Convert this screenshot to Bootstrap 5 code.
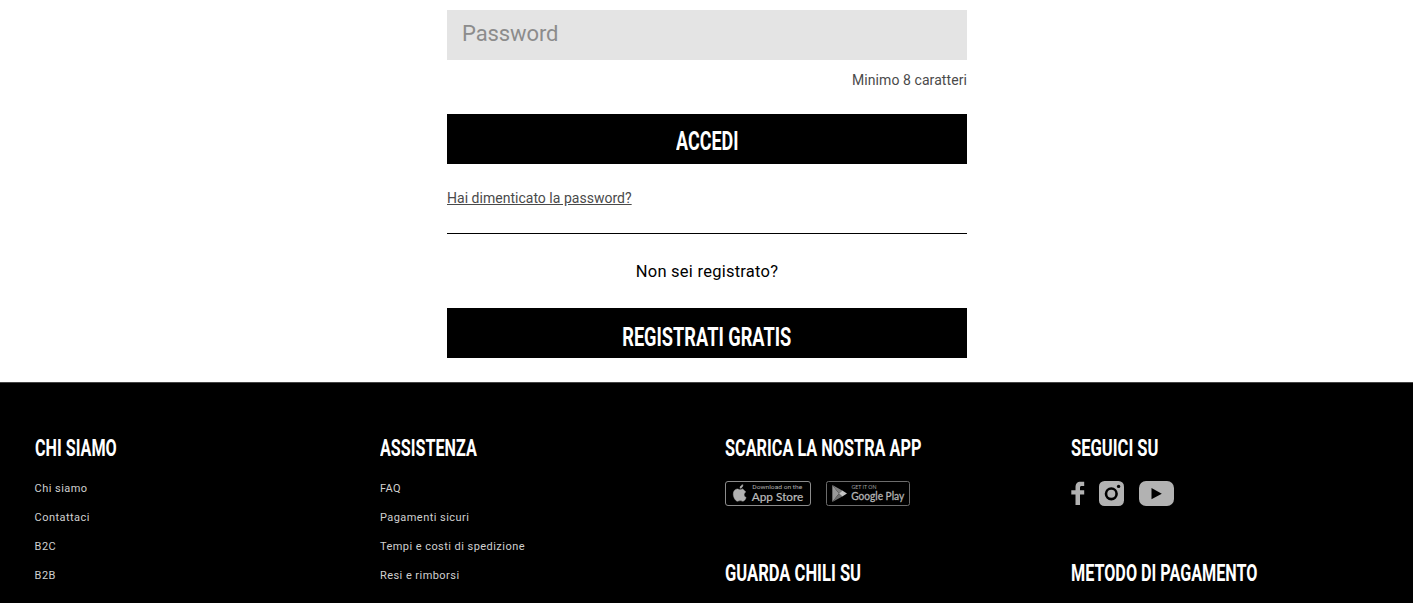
<!DOCTYPE html>
<html lang="it">
<head>
<meta charset="utf-8">
<meta name="viewport" content="width=device-width, initial-scale=1">
<title>CHILI - Accedi</title>
<link href="https://cdn.jsdelivr.net/npm/bootstrap@5.3.0/dist/css/bootstrap.min.css" rel="stylesheet">
<style>
body{font-family:Roboto,"Liberation Sans",sans-serif;background:#fff;color:#000;overflow:hidden}
.login-form{width:520px;margin-left:447px;padding-top:10px;height:382px}
.login-form .form-control{height:50px;background:#e4e4e4;padding:0 15px 3px;font-size:22px;letter-spacing:-.1px;color:#333}
.login-form .form-control::placeholder{color:#8c8c8c;opacity:1}
.hint{height:54px;padding-top:10px;font-size:14px;line-height:21px;letter-spacing:.08px;color:#4a4a4a}
.btn-chili{height:50px;background:#000;color:#fff;font-size:26px;font-weight:700;line-height:30px;padding:12px 0 8px}
.btn-chili.btn-register{padding:14px 0 6px}
.btn-chili:hover{background:#222;color:#fff}
.narrow{display:inline-block;transform:scaleX(.7);white-space:nowrap}
.btn-chili .tight{transform:scaleX(.69)}
.forgot{height:69px;padding-top:24px;font-size:14px;line-height:21px;letter-spacing:.02px}
.forgot a{color:#4a4a4a}
.separator{height:1px;background:#000}
.ask{height:74px;padding-top:26px;font-size:16.5px;line-height:24px;letter-spacing:.25px}
.site-footer{height:221px;background:#000;border-top:1px solid #444;padding:50px 12px 0 19.6px;overflow:hidden}
.site-footer .row>div{padding:0 15px}
.site-footer h2{color:#fff;font-size:24px;line-height:30px;font-weight:700;margin:0 0 17px}
.site-footer h2 .narrow{transform-origin:0 50%;transform:scaleX(.674)}
.site-footer h2 .semi{transform:scaleX(.69)}
.site-footer h2 .scarica{transform:scaleX(.678)}
.site-footer li{font-size:11px;line-height:17px;margin-bottom:12px;letter-spacing:.45px}
.site-footer li a{color:#d0d0d0;text-decoration:none}
.icon-row{height:25px;margin:18px 0 52px}
.icon-row svg{display:block}
.store-gap{margin-right:15px}
</style>
</head>
<body>
<main class="login-form">
  <input class="form-control border-0 rounded-0 shadow-none" type="password" placeholder="Password">
  <div class="hint text-end"><span>Minimo 8 caratteri</span></div>
  <button class="btn btn-chili border-0 rounded-0 w-100 d-block"><span class="narrow tight">ACCEDI</span></button>
  <div class="forgot"><a href="#">Hai dimenticato la password?</a></div>
  <div class="separator"></div>
  <div class="ask text-center"><span>Non sei registrato?</span></div>
  <a href="#" class="btn btn-chili btn-register border-0 rounded-0 w-100 d-block"><span class="narrow">REGISTRATI GRATIS</span></a>
</main>
<footer class="site-footer">
  <div class="row g-0">
    <div class="col-3">
      <h2><span class="narrow">CHI SIAMO</span></h2>
      <ul class="list-unstyled m-0"><li><a href="#">Chi siamo</a></li><li><a href="#">Contattaci</a></li><li><a href="#">B2C</a></li><li><a href="#">B2B</a></li></ul>
    </div>
    <div class="col-3">
      <h2><span class="narrow">ASSISTENZA</span></h2>
      <ul class="list-unstyled m-0"><li><a href="#">FAQ</a></li><li><a href="#">Pagamenti sicuri</a></li><li><a href="#">Tempi e costi di spedizione</a></li><li><a href="#">Resi e rimborsi</a></li></ul>
    </div>
    <div class="col-3">
      <h2><span class="narrow scarica">SCARICA LA NOSTRA APP</span></h2>
      <div class="icon-row d-flex">
        <a href="#" class="store-gap" aria-label="App Store"><svg width="86" height="25" viewBox="0 0 86 25">
          <rect x=".5" y=".5" width="85" height="24" rx="2.5" fill="#000" stroke="#8c8c8c"/>
          <path transform="translate(.3 .3)" d="M17.300 7.600c-.9.1-2 .9-2.600.9-.7 0-1.600-.8-2.700-.8-2.200.1-4 1.900-4 5.100 0 3.400 2.300 7.100 4.200 7.100 1 0 1.500-.6 2.700-.6s1.600.6 2.700.6c1.500 0 2.700-2.200 3.200-3.700-1.300-.5-2-1.600-2-2.800 0-1.100.6-2.100 1.600-2.700-.7-1.100-1.900-1.900-3.100-3.100zM14.700 7c-.1-1.800 1.300-3.400 2.900-3.600.2 1.900-1.300 3.500-2.900 3.600z" fill="#b2b2b2" stroke="#b2b2b2" stroke-width=".5"/>
          <text x="27.300" y="8.300" font-size="5.600" textLength="50" lengthAdjust="spacingAndGlyphs" fill="#b0b0b0" font-family="Roboto,sans-serif">Download on the</text>
          <text x="26.800" y="19.600" font-size="11.600" textLength="51.500" lengthAdjust="spacingAndGlyphs" fill="#bcbcbc" stroke="#bcbcbc" stroke-width=".2" font-family="Lato,sans-serif">App Store</text>
        </svg></a>
        <a href="#" aria-label="Google Play"><svg width="84" height="25" viewBox="0 0 84 25">
          <rect x=".5" y=".5" width="83" height="24" rx="2" fill="#000" stroke="#6c6c6c"/>
          <path d="M6.300 4v17L13 12.500z" fill="#999"/><path d="M6.300 4 13 12.500l3.300-3z" fill="#808080"/><path d="M6.300 21 13 12.500l3.300 3z" fill="#707070"/><path d="m16.300 9.500 4.700 3-4.700 3-3.300-3z" fill="#c4c4c4"/>
          <text x="25.500" y="8.300" font-size="5.400" textLength="25" lengthAdjust="spacingAndGlyphs" fill="#a0a0a0" font-family="Lato,sans-serif">GET IT ON</text>
          <text x="25.200" y="18.900" font-size="10.800" textLength="53" lengthAdjust="spacingAndGlyphs" fill="#b4b4b4" stroke="#b4b4b4" stroke-width=".3" font-family="Lato,sans-serif">Google Play</text>
        </svg></a>
      </div>
      <h2><span class="narrow semi">GUARDA CHILI SU</span></h2>
    </div>
    <div class="col-3">
      <h2><span class="narrow semi">SEGUICI SU</span></h2>
      <div class="icon-row"><svg width="104" height="25" viewBox="0 0 104 25" fill="#b2b2b2">
        <path d="M4.500 24V13.500H.3V9.200h4.200V6.500c0-3.700 1.600-5.700 5.200-5.700h3.500v4.300h-2.400c-1.400 0-1.800.5-1.800 1.800v2.300h4.200v4.300H9V24z"/>
        <rect x="28" width="25" height="25" rx="5.500"/>
        <circle cx="40.300" cy="12.800" r="5.300" fill="none" stroke="#000" stroke-width="2.600"/><circle cx="47.600" cy="5.400" r="1.700" fill="#000"/>
        <rect x="68" width="35" height="25" rx="7"/><path d="M80.500 7v11.300l10.300-5.600z" fill="#000"/>
      </svg></div>
      <h2><span class="narrow">METODO DI PAGAMENTO</span></h2>
    </div>
  </div>
</footer>
<script src="https://cdn.jsdelivr.net/npm/bootstrap@5.3.0/dist/js/bootstrap.bundle.min.js"></script>
</body>
</html>
